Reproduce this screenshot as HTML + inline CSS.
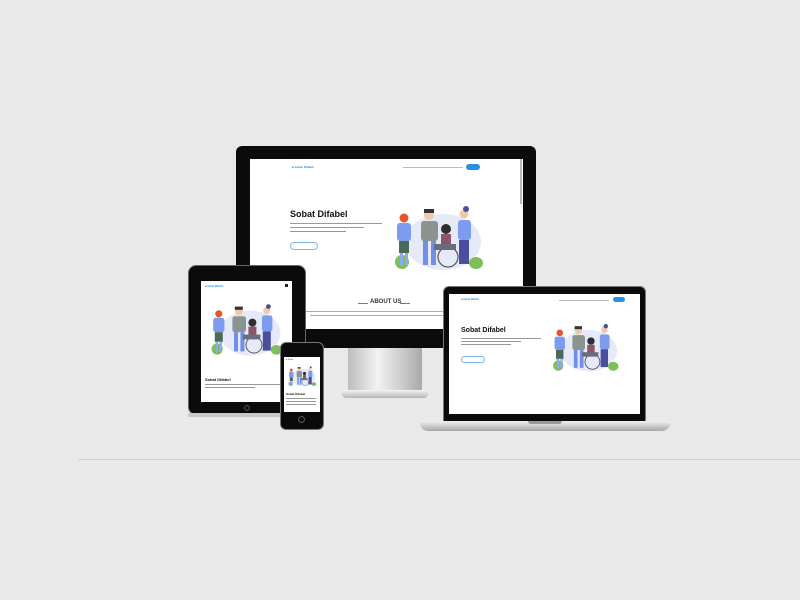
<!DOCTYPE html>
<html><head><meta charset="utf-8"><style>
*{margin:0;padding:0;box-sizing:border-box}
body{width:800px;height:600px;background:#e9e9e9;position:relative;overflow:hidden;font-family:"Liberation Sans",sans-serif}
.a{position:absolute}
.blk{background:#0b0b0b}
.scr{background:#fff;overflow:hidden}
.t{position:absolute;white-space:nowrap;color:#111;font-weight:bold}
.g{position:absolute;background:#c8c8c8;height:1px}
.btn{position:absolute;border:1px solid #7fb8ea;border-radius:8px}
.blue{position:absolute;background:#2a8fe0;border-radius:6px}
</style></head><body>
<svg width="0" height="0" style="position:absolute">
<defs>
<symbol id="ill" viewBox="0 0 100 70">
<ellipse cx="55" cy="40" rx="38" ry="28" fill="#e6eaf8"/>
<ellipse cx="14" cy="60" rx="7" ry="7" fill="#7fbf5a"/>
<ellipse cx="88" cy="61" rx="7" ry="6" fill="#7fbf5a"/>
<circle cx="16" cy="16" r="4.5" fill="#e3572f"/>
<rect x="9" y="21" width="14" height="18" rx="3" fill="#7d9cf0"/>
<rect x="11" y="39" width="10" height="12" fill="#4d6a58"/>
<rect x="12" y="51" width="3" height="13" fill="#8fa8f4"/><rect x="17" y="51" width="3" height="13" fill="#8fa8f4"/>
<circle cx="41" cy="13" r="5" fill="#f0c9a8"/><rect x="36" y="7" width="10" height="4" fill="#333"/>
<rect x="33" y="19" width="17" height="20" rx="3" fill="#8a9590"/>
<rect x="35" y="39" width="5" height="24" fill="#6f8fe8"/><rect x="43" y="39" width="5" height="24" fill="#6f8fe8"/>
<circle cx="58" cy="27" r="5" fill="#2e2e2e"/>
<rect x="53" y="32" width="10" height="12" fill="#8b5566"/>
<circle cx="60" cy="55" r="10" fill="none" stroke="#555" stroke-width="1.2"/>
<rect x="46" y="42" width="22" height="6" fill="#6a6a80"/>
<circle cx="76" cy="12" r="4.5" fill="#f0c9a8"/><circle cx="78" cy="7" r="3" fill="#4a4e9e"/>
<rect x="70" y="18" width="13" height="20" rx="3" fill="#7d9cf0"/>
<rect x="71" y="38" width="10" height="24" fill="#4a4e9e"/>
</symbol>
</defs></svg>

<div class="g" style="left:78px;top:459px;width:722px;background:#d2d2d2"></div>

<!-- Monitor -->
<div class="a" style="left:348px;top:345px;width:74px;height:50px;background:linear-gradient(90deg,#bdbdbd,#f2f2f2 40%,#cfcfcf 70%,#a9a9a9)"></div>
<div class="a" style="left:342px;top:390px;width:86px;height:8px;border-radius:4px;background:linear-gradient(#f4f4f4,#b5b5b5)"></div>
<div class="a blk" style="left:236px;top:146px;width:300px;height:202px;border-radius:6px"></div>
<div class="a scr" style="left:250px;top:159px;width:273px;height:170px">
  <div class="t" style="left:42px;top:6px;font-size:3px;color:#2a8fe0">■ Sobat Difabel</div>
  <div class="g" style="left:153px;top:8px;width:60px;background:#bbb"></div>
  <div class="blue" style="left:216px;top:5px;width:14px;height:6px"></div>
  <div class="t" style="left:40px;top:50px;font-size:9px">Sobat Difabel</div>
  <div class="g" style="left:40px;top:64px;width:92px;background:#999"></div>
  <div class="g" style="left:40px;top:68px;width:74px;background:#999"></div>
  <div class="g" style="left:40px;top:72px;width:56px;background:#999"></div>
  <div class="btn" style="left:40px;top:83px;width:28px;height:8px"></div>
  <svg class="a" style="left:138px;top:43px" width="100" height="70"><use href="#ill"/></svg>
  <div class="a" style="left:270px;top:0;width:2px;height:45px;background:#bbb"></div>
  <div class="t" style="left:120px;top:140px;font-size:6px;color:#333">ABOUT US</div>
  <div class="g" style="left:108px;top:144px;width:10px;background:#2a8fe0"></div>
  <div class="g" style="left:150px;top:144px;width:10px;background:#2a8fe0"></div>
  <div class="g" style="left:40px;top:152px;width:200px;background:#aaa"></div>
  <div class="g" style="left:60px;top:156px;width:180px;background:#aaa"></div>
</div>

<!-- Tablet -->
<div class="a blk" style="left:188px;top:265px;width:118px;height:150px;border-radius:8px;border:1px solid #666"></div>
<div class="a" style="left:188px;top:413px;width:118px;height:4px;background:#c8c8c8;border-radius:2px"></div>
<div class="a scr" style="left:201px;top:281px;width:91px;height:121px">
  <div class="t" style="left:4px;top:4px;font-size:2.5px;color:#2a8fe0">■ Sobat Difabel</div>
  <div class="a" style="left:84px;top:3px;width:3px;height:3px;background:#222"></div>
  <svg class="a" style="left:5px;top:20px" width="80" height="56"><use href="#ill"/></svg>
  <div class="t" style="left:4px;top:96px;font-size:4px">Sobat Difabel</div>
  <div class="g" style="left:4px;top:103px;width:80px;background:#999"></div>
  <div class="g" style="left:4px;top:106px;width:50px;background:#999"></div>
</div>
<div class="a" style="left:244px;top:405px;width:6px;height:6px;border-radius:50%;border:1px solid #555"></div>

<!-- Phone -->
<div class="a blk" style="left:280px;top:342px;width:44px;height:88px;border-radius:6px;border:1px solid #777"></div>
<div class="a scr" style="left:284px;top:357px;width:36px;height:55px">
  <div class="t" style="left:2px;top:2px;font-size:2px;color:#2a8fe0">■ Sobat</div>
  <svg class="a" style="left:2px;top:8px" width="32" height="22"><use href="#ill"/></svg>
  <div class="t" style="left:2px;top:35px;font-size:3px">Sobat Difabel</div>
  <div class="g" style="left:2px;top:41px;width:30px;background:#999"></div>
  <div class="g" style="left:2px;top:44px;width:30px;background:#999"></div>
  <div class="g" style="left:2px;top:47px;width:30px;background:#999"></div>
</div>
<div class="a" style="left:298px;top:416px;width:7px;height:7px;border-radius:50%;border:1px solid #555"></div>

<!-- Laptop -->
<div class="a blk" style="left:443px;top:286px;width:203px;height:136px;border-radius:6px 6px 0 0;border:1px solid #777"></div>
<div class="a scr" style="left:449px;top:294px;width:191px;height:120px">
  <div class="t" style="left:12px;top:4px;font-size:2.5px;color:#2a8fe0">■ Sobat Difabel</div>
  <div class="g" style="left:110px;top:6px;width:50px;background:#bbb"></div>
  <div class="blue" style="left:164px;top:3px;width:12px;height:5px"></div>
  <div class="t" style="left:12px;top:33px;font-size:7px">Sobat Difabel</div>
  <div class="g" style="left:12px;top:44px;width:80px;background:#999"></div>
  <div class="g" style="left:12px;top:47px;width:60px;background:#999"></div>
  <div class="g" style="left:12px;top:50px;width:50px;background:#999"></div>
  <div class="btn" style="left:12px;top:62px;width:24px;height:7px"></div>
  <svg class="a" style="left:96px;top:27px" width="80" height="52"><use href="#ill"/></svg>
</div>
<div class="a" style="left:420px;top:421px;width:250px;height:10px;border-radius:0 0 8px 8px;background:linear-gradient(#f0f0f0,#a8a8a8)"></div>
<div class="a" style="left:528px;top:421px;width:34px;height:3px;background:#9a9a9a;border-radius:0 0 3px 3px"></div>
</body></html>
